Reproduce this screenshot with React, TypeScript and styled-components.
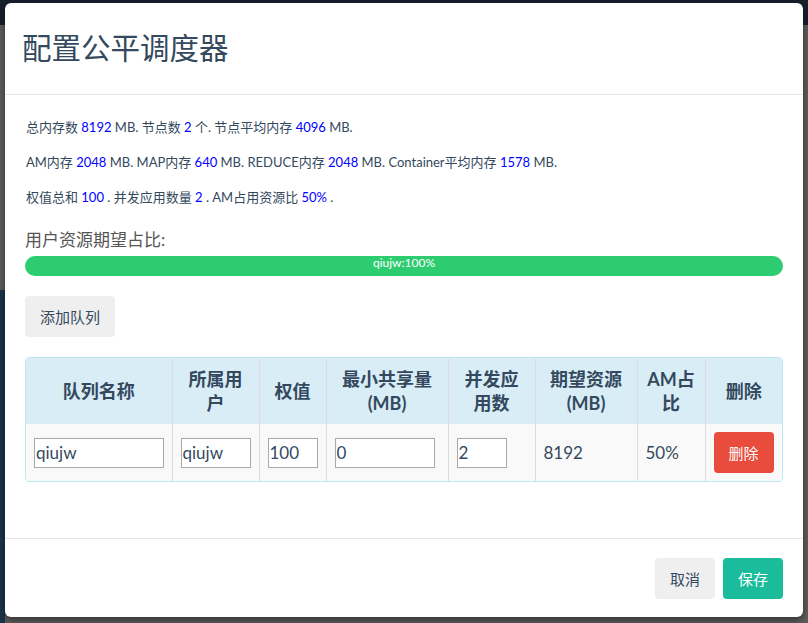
import React from "react";
import styled, { createGlobalStyle } from "styled-components";

const GlobalStyle = createGlobalStyle`
  html, body { margin: 0; padding: 0; }
  body {
    width: 808px;
    height: 623px;
    overflow: hidden;
    font-family: Lato, "Noto Sans CJK SC", sans-serif;
    color: #34495e;
  }
`;

const Backdrop = styled.div`
  width: 808px;
  height: 623px;
  box-sizing: border-box;
  padding: 3px 5px 6px 5px;
  background:
    linear-gradient(to right, #1b3550 0 5px, transparent 5px) 0 290px / 100% 100% no-repeat,
    linear-gradient(#16202b 0 25px, #5f5f5f 25px);
`;

const Modal = styled.div`
  width: 798px;
  height: 614px;
  background: #fff;
  border-radius: 6px;
  box-shadow: 0 3px 9px rgba(0, 0, 0, 0.5);
  display: flex;
  flex-direction: column;
  overflow: hidden;
`;

const Header = styled.div`
  height: 91px;
  flex: none;
  display: flex;
  align-items: center;
  padding: 0 17px;
  border-bottom: 1px solid #e5e5e5;
`;

const Title = styled.h3`
  margin: 0;
  font-family: "Liberation Serif", "Noto Sans CJK SC", serif;
  font-weight: normal;
  font-size: 29.5px;
  line-height: 32px;
  color: #34495e;
`;

const Body = styled.div`
  flex: 1;
  padding: 22px 20px 0 20px;
`;

const Para = styled.p`
  margin: 0 0 15px 1px;
  font-size: 13px;
  line-height: 20px;
  color: #34495e;
`;

const Num = styled.span`
  color: #0000ff;
`;

const Label = styled.div`
  margin: 21px 0 4px 0;
  font-size: 17px;
  line-height: 24px;
  color: #555;
`;

const Progress = styled.div`
  height: 20px;
  border-radius: 10px;
  background: #ecf0f1;
  overflow: hidden;
  display: flex;
`;

const ProgressBar = styled.div`
  height: 100%;
  background: #2ecc71;
  color: #fff;
  font-size: 12px;
  line-height: 13px;
  text-align: center;
`;

const Button = styled.button<{ $variant?: "default" | "danger" | "primary" }>`
  height: 41px;
  padding: 0 15px;
  border: none;
  border-radius: 4px;
  font-family: Lato, "Noto Sans CJK SC", sans-serif;
  font-size: 15px;
  cursor: pointer;
  background: ${(p) =>
    p.$variant === "danger" ? "#e74c3c" : p.$variant === "primary" ? "#1abc9c" : "#efefef"};
  color: ${(p) => (p.$variant === "danger" || p.$variant === "primary" ? "#fff" : "#34495e")};
`;

const AddRow = styled.div`
  margin-top: 20px;
  display: flex;
`;

const TableWrap = styled.div`
  margin-top: 20px;
  border: 1px solid #bce8f1;
  border-radius: 4px;
  overflow: hidden;
`;

const Table = styled.table`
  width: 100%;
  border-collapse: collapse;
  table-layout: fixed;
`;

const Th = styled.th`
  background: #d9edf7;
  font-size: 18px;
  font-weight: bold;
  line-height: 24px;
  padding: 9px 8px;
  text-align: center;
  vertical-align: middle;
  color: #34495e;
  border-left: 1px solid #ddd;
  &:first-child { border-left: none; }
`;

const Td = styled.td`
  background: #f9f9f9;
  font-size: 17px;
  line-height: 24px;
  padding: 8px;
  vertical-align: middle;
  color: #34495e;
  border-left: 1px solid #ddd;
  &:first-child { border-left: none; }
`;

const Input = styled.input<{ $w: number }>`
  width: ${(p) => p.$w}px;
  height: 30px;
  box-sizing: border-box;
  border: 1px solid #a9a9a9;
  padding: 0 1px;
  font-family: Lato, "Noto Sans CJK SC", sans-serif;
  font-size: 17px;
  color: #34495e;
  background: #fff;
  display: block;
`;

const Footer = styled.div`
  flex: none;
  height: 79px;
  box-sizing: border-box;
  border-top: 1px solid #e5e5e5;
  padding: 19px 20px;
  display: flex;
  justify-content: flex-end;
  gap: 8px;
`;

const columns = [
  { title: "队列名称", w: 146 },
  { title: "所属用户", w: 87 },
  { title: "权值", w: 67 },
  { title: "最小共享量(MB)", w: 122 },
  { title: "并发应用数", w: 87 },
  { title: "期望资源(MB)", w: 102 },
  { title: "AM占比", w: 68 },
  { title: "删除", w: 77 },
];

export default function App() {
  return (
    <>
      <GlobalStyle />
      <Backdrop>
        <Modal>
          <Header>
            <Title>配置公平调度器</Title>
          </Header>
          <Body>
            <Para>
              总内存数 <Num>8192</Num> MB. 节点数 <Num>2</Num> 个. 节点平均内存 <Num>4096</Num> MB.
            </Para>
            <Para>
              AM内存 <Num>2048</Num> MB. MAP内存 <Num>640</Num> MB. REDUCE内存 <Num>2048</Num> MB.
              Container平均内存 <Num>1578</Num> MB.
            </Para>
            <Para>
              权值总和 <Num>100</Num> . 并发应用数量 <Num>2</Num> . AM占用资源比 <Num>50%</Num> .
            </Para>
            <Label>用户资源期望占比:</Label>
            <Progress>
              <ProgressBar style={{ width: "100%" }}>qiujw:100%</ProgressBar>
            </Progress>
            <AddRow>
              <Button>添加队列</Button>
            </AddRow>
            <TableWrap>
              <Table>
                <colgroup>
                  {columns.map((c) => (
                    <col key={c.title} style={{ width: c.w }} />
                  ))}
                </colgroup>
                <thead>
                  <tr>
                    {columns.map((c) => (
                      <Th key={c.title}>{c.title}</Th>
                    ))}
                  </tr>
                </thead>
                <tbody>
                  <tr>
                    <Td><Input $w={130} defaultValue="qiujw" /></Td>
                    <Td><Input $w={70} defaultValue="qiujw" /></Td>
                    <Td><Input $w={50} defaultValue="100" /></Td>
                    <Td><Input $w={100} defaultValue="0" /></Td>
                    <Td><Input $w={50} defaultValue="2" /></Td>
                    <Td>8192</Td>
                    <Td>50%</Td>
                    <Td><Button $variant="danger">删除</Button></Td>
                  </tr>
                </tbody>
              </Table>
            </TableWrap>
          </Body>
          <Footer>
            <Button>取消</Button>
            <Button $variant="primary">保存</Button>
          </Footer>
        </Modal>
      </Backdrop>
    </>
  );
}
